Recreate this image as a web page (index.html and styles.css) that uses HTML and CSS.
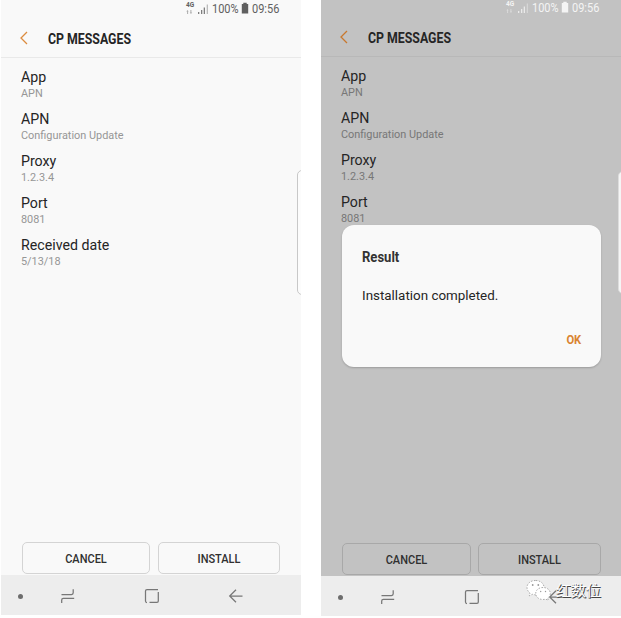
FILE: index.html
```
<!DOCTYPE html>
<html lang="en">
<head>
<meta charset="utf-8">
<title>CP Messages</title>
<link rel="stylesheet" href="styles.css">
</head>
<body>
<svg class="defs" aria-hidden="true">
  <symbol id="signal" viewBox="0 0 26 14">
    <g fill="currentColor"><path opacity=".8" d="M13 11h1.300v2H13zM16 9h1.300v4H16zM18.700 6.500H20V13h-1.300z"/><path opacity=".4" d="M21.700 3.500H23V13h-1.300z"/>
    <path opacity=".5" d="M2.5 9l1.200 1.500h-.6V13h-1v-2.500h-.8zM6 13l-1.300-1.500h.7V9h1v2.500h.8z"/></g>
  </symbol>
  <symbol id="battery" viewBox="0 0 8 12"><path fill="currentColor" d="M2.300 .7h3.400V2H7.200v9.500H.8V2h1.500z"/></symbol>
  <symbol id="chevron" viewBox="0 0 10 14"><path d="M8 1L2 7l6 6" fill="none" stroke="currentColor" stroke-width="1.300"/></symbol>
  <symbol id="recent" viewBox="0 0 16 16"><path d="M1.500 6.500h10q1.700 0 1.700-1.700V1.200M1.700 15v-3q0-1.700 1.700-1.700h10.800" fill="none" stroke="currentColor" stroke-width="1.250"/></symbol>
  <symbol id="home" viewBox="0 0 16 16"><path d="M3 14.500q-1.500 0-1.500-1.500V3q0-1.500 1.500-1.500h11M14.300 4v9q0 1.300-1.300 1.300H5.500" fill="none" stroke="currentColor" stroke-width="1.250"/></symbol>
  <symbol id="back" viewBox="0 0 16 16"><path d="M14.500 8H2M8 1.700L1.700 8 8 14.300" fill="none" stroke="currentColor" stroke-width="1.250"/></symbol>
</svg>
<main class="screens">
  <section class="phone">
    <div class="content">
      <div class="status">
        <span class="net"><svg class="signal"><use href="#signal"/></svg><b>4G</b></span>
        <span class="pct"><span>100%</span></span><svg class="battery"><use href="#battery"/></svg><span class="time"><span>09:56</span></span>
      </div>
      <header class="bar"><svg class="chevron"><use href="#chevron"/></svg><h1>CP MESSAGES</h1></header>
      <dl class="fields">
        <div><dt>App</dt><dd>APN</dd></div>
        <div><dt>APN</dt><dd>Configuration Update</dd></div>
        <div><dt>Proxy</dt><dd>1.2.3.4</dd></div>
        <div><dt>Port</dt><dd>8081</dd></div>
        <div><dt>Received date</dt><dd>5/13/18</dd></div>
      </dl>
      <div class="actions"><button class="cancel"><span>CANCEL</span></button><button class="install"><span>INSTALL</span></button></div>
      <i class="edge"></i>
    </div>
    <nav class="nav"><i class="dot"></i><svg class="recent"><use href="#recent"/></svg><svg class="home"><use href="#home"/></svg><svg class="back"><use href="#back"/></svg></nav>
  </section>
  <section class="phone dimmed">
    <div class="content">
      <div class="status">
        <span class="net"><svg class="signal"><use href="#signal"/></svg><b>4G</b></span>
        <span class="pct"><span>100%</span></span><svg class="battery"><use href="#battery"/></svg><span class="time"><span>09:56</span></span>
      </div>
      <header class="bar"><svg class="chevron"><use href="#chevron"/></svg><h1>CP MESSAGES</h1></header>
      <dl class="fields">
        <div><dt>App</dt><dd>APN</dd></div>
        <div><dt>APN</dt><dd>Configuration Update</dd></div>
        <div><dt>Proxy</dt><dd>1.2.3.4</dd></div>
        <div><dt>Port</dt><dd>8081</dd></div>
      </dl>
      <div class="actions"><button class="cancel"><span>CANCEL</span></button><button class="install"><span>INSTALL</span></button></div>
      <i class="edge"></i>
      <div class="dialog" role="dialog">
        <h2>Result</h2>
        <p>Installation completed.</p>
        <a class="ok">OK</a>
      </div>
    </div>
    <nav class="nav"><i class="dot"></i><svg class="recent"><use href="#recent"/></svg><svg class="home"><use href="#home"/></svg><svg class="back"><use href="#back"/></svg></nav>
    <div class="brand">
      <svg class="wechat" viewBox="0 0 26 22">
        <g stroke="#888" stroke-width=".7" stroke-dasharray="1.500 1.500">
          <path fill="#fff" d="M9.500 1.500c-5 0-8.500 3-8.500 7 0 2.300 1.200 4.200 3 5.500l-.7 2.800 3-1.500c1 .3 2 .5 3.200.5 5 0 8.500-3.200 8.500-7.300 0-4-3.500-7-8.500-7z"/>
          <path fill="#fff" d="M17 8.500c-4.300 0-7.300 2.600-7.300 6s3 6 7.300 6c1 0 1.900-.1 2.700-.4l2.600 1.300-.6-2.300c1.600-1.100 2.600-2.700 2.600-4.600 0-3.400-3-6-7.300-6z"/>
        </g>
        <g fill="#999"><circle cx="6.700" cy="6" r=".9"/><circle cx="12.300" cy="6" r=".9"/><circle cx="14.700" cy="12.500" r=".7"/><circle cx="19.500" cy="12.500" r=".7"/></g>
      </svg>
      <span lang="zh">红数位</span>
    </div>
  </section>
</main>
</body>
</html>
```
FILE: styles.css
```
* { box-sizing: border-box; }
body { margin: 0; background: #fff; font-family: Roboto, "Liberation Sans", sans-serif; color: #252525; overflow: hidden; }
h1, h2, p, dl, dd { margin: 0; }
.defs { position: absolute; width: 0; height: 0; }
svg { display: block; flex: none; }
.screens { display: flex; gap: 20px; padding-left: 1px; align-items: flex-start; }
.phone { position: relative; width: 300px; flex: none; }
.content { position: relative; display: flex; flex-direction: column; height: 575px; background: #f9f9f9; overflow: hidden; }
.status { display: flex; height: 18px; padding: 2px 0 0 184px; color: #606060; font-size: 12.5px; line-height: 14px; }
.net { position: relative; width: 27px; }
.net b { position: absolute; left: 1px; top: 0; font-size: 6.5px; line-height: 7px; }
.signal { width: 26px; height: 14px; margin-top: -1px; }
.pct { width: 28px; }
.pct span, .time span { display: block; width: max-content; transform: scaleX(.88); transform-origin: left; }
.battery { width: 8px; height: 12px; margin: 0 1px; }
.time { margin-left: 2px; }
.bar { display: flex; align-items: center; height: 40px; padding: 2px 0 0 18px; border-bottom: 1px solid #e9e9e9; }
.chevron { width: 10px; height: 14px; margin-top: -1px; color: #dc8c3f; }
h1 { margin-left: 19px; font-size: 14px; line-height: 18px; transform: scaleX(.88); transform-origin: left; }
.fields { padding: 10px 20px 0; }
.fields div { height: 42px; }
dt { font-size: 14.2px; line-height: 18px; }
dd { font-size: 10.9px; line-height: 15px; color: #969696; }
.actions { display: flex; gap: 8px; margin: auto 20px 1px 21px; }
.actions button { height: 32px; padding: 1px 0 0; border: 1px solid #d4d4d4; border-radius: 5px; background: transparent; color: #303030; font: 500 12.5px/18px Roboto, sans-serif; }
.actions span { display: block; transform: scaleX(.88); }
.cancel { width: 128px; }
.install { width: 122px; }
.edge { position: absolute; right: -6px; top: 170px; width: 10px; height: 125px; border: 1px solid #c8c8c8; border-radius: 5px; background: #fcfcfc; }
.nav { display: flex; align-items: center; height: 40px; padding: 2px 0 0 17px; background: #ededed; color: #777; }
.nav svg { width: 16px; height: 16px; }
.dot { width: 5px; height: 5px; border-radius: 50%; background: #6d6d6d; }
.recent { margin-left: 37px; }
.home { margin-left: 68px; }
.back { margin-left: 68px; }
.dimmed .content { height: 576px; background: #c2c2c2; }
.dimmed .status { height: 17px; padding-top: 1px; color: #f4f4f4; }
.dimmed .bar { border-color: #b8b8b8; }
.dimmed .chevron { color: #c8782e; }
.dimmed dd { color: #777; }
.dimmed .actions button { border-color: #a8a8a8; }
.dimmed .cancel { width: 129px; }
.dimmed .actions { gap: 7px; }
.dimmed .install { width: 123px; }
.dimmed .edge { top: 171px; right: -7px; height: 123px; background: #f5f5f5; border-color: #ddd; }
.dialog { position: absolute; left: 21px; top: 225px; width: 259px; height: 142px; padding: 23px 20px 0; display: flex; flex-direction: column; border-radius: 12px; background: #f9f9f9; box-shadow: 0 1px 2px rgba(0,0,0,.2); }
h2 { font-size: 14.5px; line-height: 20px; color: #333; transform: scaleX(.9); transform-origin: left; }
.dialog p { margin-top: 18px; font-size: 13.4px; line-height: 20px; }
.ok { margin-top: 25px; align-self: flex-end; font-size: 13px; font-weight: 700; line-height: 18px; color: #d98430; transform: scaleX(.86); transform-origin: right; }
.brand { position: absolute; left: 205px; top: 579px; display: flex; align-items: center; }
.wechat { width: 26px; height: 22px; }
.brand span { margin-left: 4px; font: 15px/22px "Noto Sans CJK SC", sans-serif; color: #fff; text-shadow: 1px 1px 0 #444, 0 1px 0 #777; }
```
